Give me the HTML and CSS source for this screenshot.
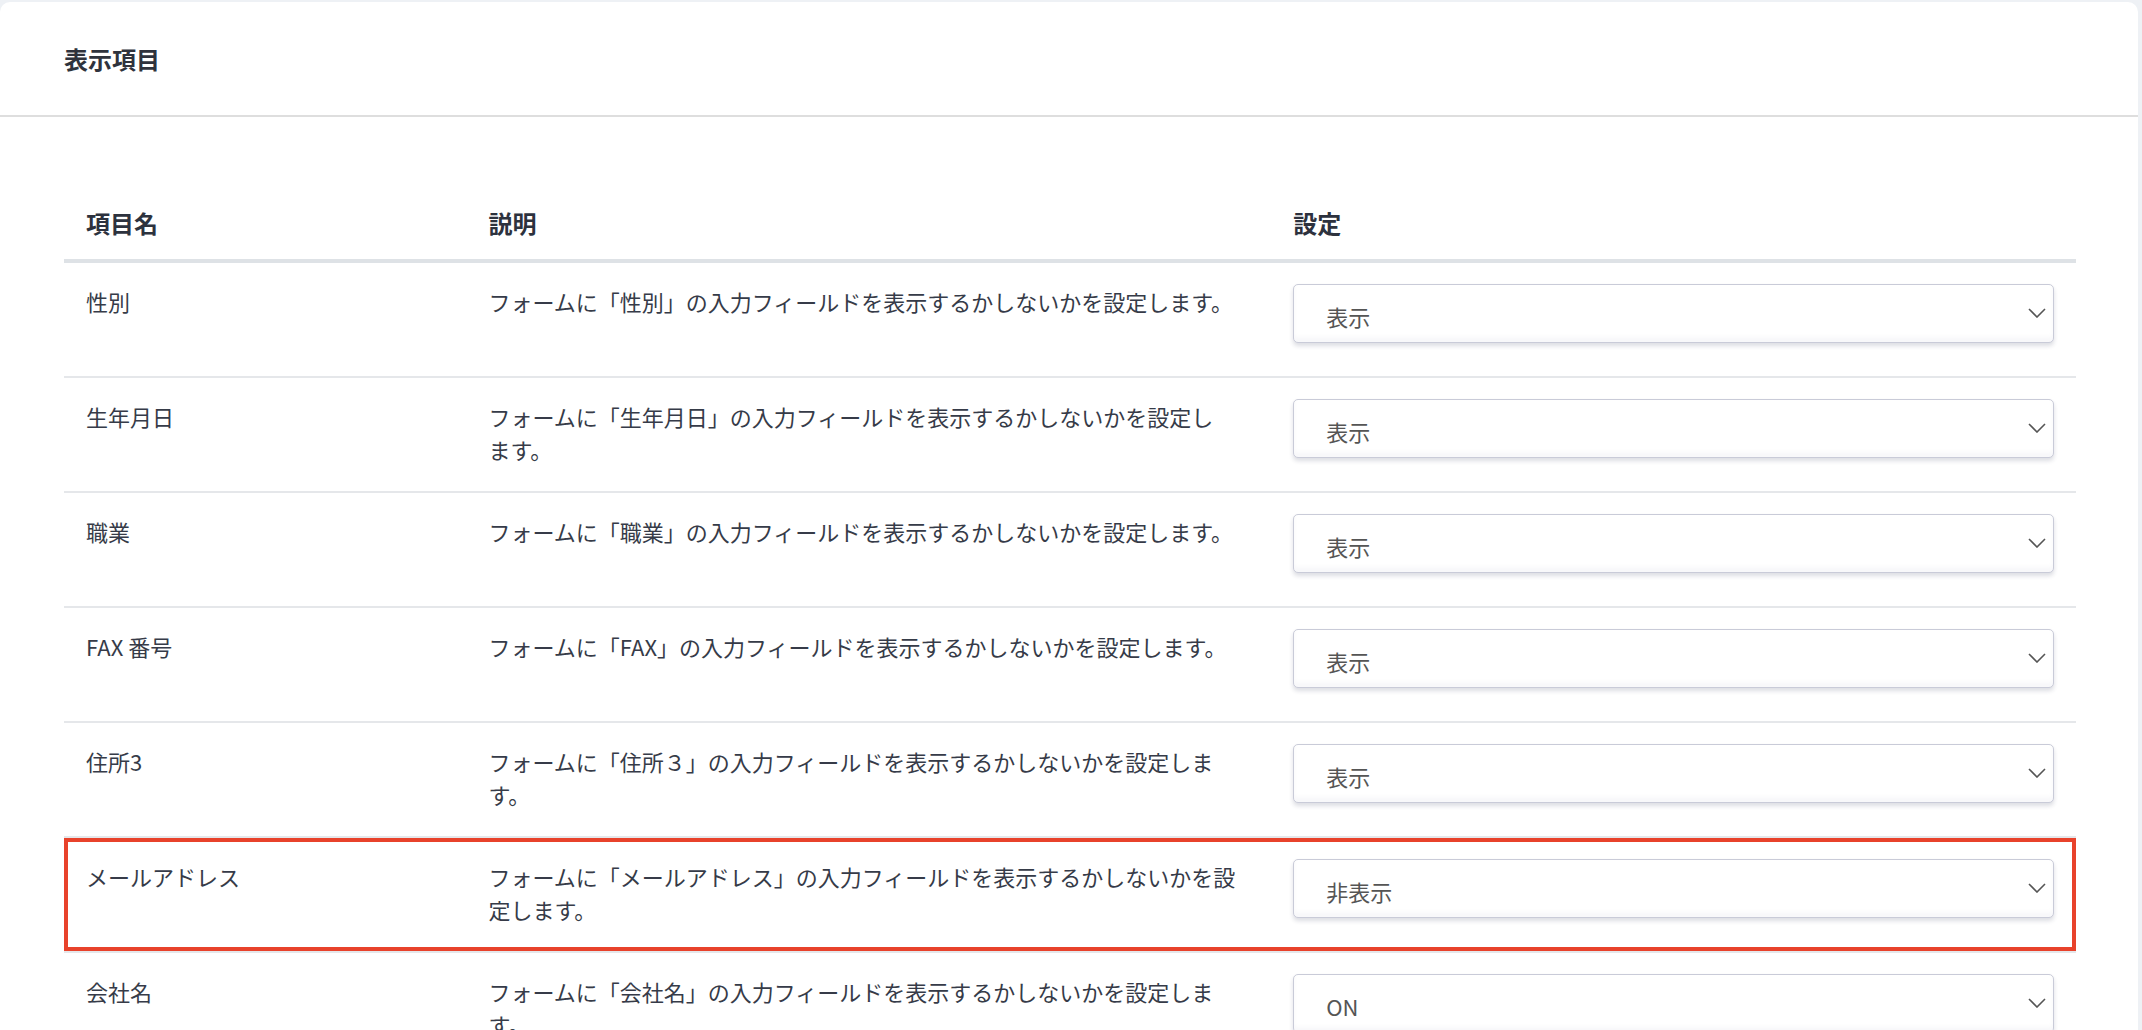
FILE: index.html
```html
<!DOCTYPE html>
<html lang="ja">
<head>
    <meta charset="UTF-8">
    <meta name="viewport" content="width=device-width, initial-scale=1.0">
    <title>表示項目</title>
    <link rel="stylesheet" href="styles.css">
</head>
<body>
    <div class="page">
        <div class="card">
            <div class="card-header">
                <h2 class="card-title">表示項目</h2>
            </div>
            <div class="card-body">
                <table class="item-table">
                    <colgroup>
                        <col class="col-name">
                        <col class="col-desc">
                        <col class="col-setting">
                    </colgroup>
                    <thead>
                        <tr>
                            <th>項目名</th>
                            <th>説明</th>
                            <th>設定</th>
                        </tr>
                    </thead>
                    <tbody>
                        <tr>
                            <td>性別</td>
                            <td>フォームに「性別」の入力フィールドを表示するかしないかを設定します。</td>
                            <td class="setting">
                                <div class="select-wrap">
                                    <select class="form-select">
                                        <option selected>表示</option>
                                        <option>非表示</option>
                                    </select>
                                    <svg class="chevron" width="18" height="10" viewBox="0 0 18 10"><path d="M1 1l8 8 8-8" /></svg>
                                </div>
                            </td>
                        </tr>
                        <tr>
                            <td>生年月日</td>
                            <td>フォームに「生年月日」の入力フィールドを表示するかしないかを設定し<br>ます。</td>
                            <td class="setting">
                                <div class="select-wrap">
                                    <select class="form-select">
                                        <option selected>表示</option>
                                        <option>非表示</option>
                                    </select>
                                    <svg class="chevron" width="18" height="10" viewBox="0 0 18 10"><path d="M1 1l8 8 8-8" /></svg>
                                </div>
                            </td>
                        </tr>
                        <tr>
                            <td>職業</td>
                            <td>フォームに「職業」の入力フィールドを表示するかしないかを設定します。</td>
                            <td class="setting">
                                <div class="select-wrap">
                                    <select class="form-select">
                                        <option selected>表示</option>
                                        <option>非表示</option>
                                    </select>
                                    <svg class="chevron" width="18" height="10" viewBox="0 0 18 10"><path d="M1 1l8 8 8-8" /></svg>
                                </div>
                            </td>
                        </tr>
                        <tr>
                            <td>FAX 番号</td>
                            <td>フォームに「FAX」の入力フィールドを表示するかしないかを設定します。</td>
                            <td class="setting">
                                <div class="select-wrap">
                                    <select class="form-select">
                                        <option selected>表示</option>
                                        <option>非表示</option>
                                    </select>
                                    <svg class="chevron" width="18" height="10" viewBox="0 0 18 10"><path d="M1 1l8 8 8-8" /></svg>
                                </div>
                            </td>
                        </tr>
                        <tr>
                            <td>住所3</td>
                            <td>フォームに「住所３」の入力フィールドを表示するかしないかを設定します。</td>
                            <td class="setting">
                                <div class="select-wrap">
                                    <select class="form-select">
                                        <option selected>表示</option>
                                        <option>非表示</option>
                                    </select>
                                    <svg class="chevron" width="18" height="10" viewBox="0 0 18 10"><path d="M1 1l8 8 8-8" /></svg>
                                </div>
                            </td>
                        </tr>
                        <!-- highlighted row -->
                        <tr class="is-highlight">
                            <td>メールアドレス</td>
                            <td>フォームに「メールアドレス」の入力フィールドを表示するかしないかを設<br>定します。</td>
                            <td class="setting">
                                <div class="select-wrap">
                                    <select class="form-select">
                                        <option>表示</option>
                                        <option selected>非表示</option>
                                    </select>
                                    <svg class="chevron" width="18" height="10" viewBox="0 0 18 10"><path d="M1 1l8 8 8-8" /></svg>
                                </div>
                            </td>
                        </tr>
                        <tr>
                            <td>会社名</td>
                            <td>フォームに「会社名」の入力フィールドを表示するかしないかを設定します。</td>
                            <td class="setting">
                                <div class="select-wrap">
                                    <select class="form-select">
                                        <option selected>ON</option>
                                        <option>OFF</option>
                                    </select>
                                    <svg class="chevron" width="18" height="10" viewBox="0 0 18 10"><path d="M1 1l8 8 8-8" /></svg>
                                </div>
                            </td>
                        </tr>
                    </tbody>
                </table>
            </div>
        </div>
    </div>
</body>
</html>
```

FILE: styles.css
```css
html, body {
    margin: 0;
    padding: 0;
    height: 100%;
}
body {
    font-family: "Noto Sans CJK JP", "Noto Sans", sans-serif;
    background-color: #eef1f5;
    color: #363b48;
    overflow: hidden;
}
.page {
    padding: 2px 4px 0 0;
}
.card {
    background: #fff;
    border-radius: 10px 10px 0 0;
}
.card-header {
    padding: 40px 64px;
    border-bottom: 2px solid #dedede;
}
.card-title {
    margin: 0;
    font-size: 24px;
    line-height: 33px;
    font-weight: bold;
    color: #2f333d;
}
.card-body {
    padding: 67px 62px 0 64px;
}
.item-table {
    width: 100%;
    table-layout: fixed;
    border-collapse: collapse;
}
.col-name {
    width: 20%;
}
.col-desc, .col-setting {
    width: 40%;
}
.item-table th {
    text-align: left;
    font-size: 24px;
    line-height: 33px;
    font-weight: bold;
    color: #2d323e;
    padding: 22px 22px 20px;
    border-bottom: 4px solid #dee2e6;
}
.item-table td {
    vertical-align: top;
    font-size: 22px;
    line-height: 33px;
    padding: 22px 22px 0;
    border-bottom: 2px solid #e5e7ea;
}
.item-table td.setting {
    padding-top: 21px;
}
/* red frame round one row */
.is-highlight td {
    box-shadow: inset 0 4px 0 #e8422b, inset 0 -4px 0 #e8422b;
}
.is-highlight td:first-child {
    box-shadow: inset 0 4px 0 #e8422b, inset 0 -4px 0 #e8422b, inset 4px 0 0 #e8422b;
}
.is-highlight td:last-child {
    box-shadow: inset 0 4px 0 #e8422b, inset 0 -4px 0 #e8422b, inset -4px 0 0 #e8422b;
}
.select-wrap {
    position: relative;
    margin-bottom: 33px;
}
.form-select {
    display: block;
    width: 100%;
    height: 59px;
    margin: 0;
    padding: 5px 40px 0 32px;
    appearance: none;
    -webkit-appearance: none;
    font-family: "Noto Sans CJK JP", "Noto Sans", sans-serif;
    font-size: 22px;
    color: #555;
    background: #fff;
    border: 1.5px solid #c9cbd8;
    border-radius: 5px;
    box-shadow: 0 3px 4px rgba(40, 45, 80, 0.16), inset 0 -5px 4px rgba(40, 45, 80, 0.03);
}
.chevron {
    position: absolute;
    right: 8px;
    top: 50%;
    margin-top: -6px;
    pointer-events: none;
}
.chevron path {
    fill: none;
    stroke: #555;
    stroke-width: 1.6;
}
```
